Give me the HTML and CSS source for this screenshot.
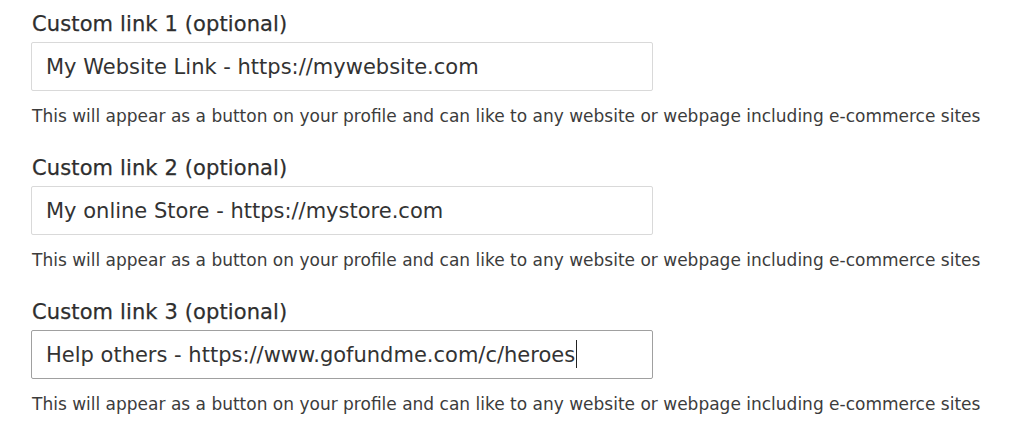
FILE: index.html
```html
<!DOCTYPE html>
<html lang="en">
<head>
<meta charset="utf-8">
<title>Custom links</title>
<link rel="stylesheet" href="styles.css">
</head>
<body>
<form class="links">
  <div class="field">
    <label class="label" for="l1">Custom link 1 (optional)</label>
    <div class="input" id="l1">My Website Link - https://mywebsite.com</div>
    <p class="help">This will appear as a button on your profile and can like to any website or webpage including e-commerce sites</p>
  </div>
  <div class="field">
    <label class="label" for="l2">Custom link 2 (optional)</label>
    <div class="input" id="l2">My online Store - https://mystore.com</div>
    <p class="help">This will appear as a button on your profile and can like to any website or webpage including e-commerce sites</p>
  </div>
  <div class="field">
    <label class="label" for="l3">Custom link 3 (optional)</label>
    <div class="input focused" id="l3">Help others - https://www.gofundme.com/c/heroes<span class="caret"></span></div>
    <p class="help">This will appear as a button on your profile and can like to any website or webpage including e-commerce sites</p>
  </div>
</form>
</body>
</html>
```
FILE: styles.css
```css
html, body {
  margin: 0;
  padding: 0;
  background: #ffffff;
}
body {
  font-family: "DejaVu Sans", "Open Sans", sans-serif;
  color: #333333;
}
.links {
  display: flex;
  flex-direction: column;
  gap: 27px;
  padding: 10px 0 0 32px;
}
.field {
  display: flex;
  flex-direction: column;
  align-items: flex-start;
}
.label {
  display: block;
  font-size: 21px;
  line-height: 28px;
  font-weight: normal;
  color: #2e2e2e;
  letter-spacing: 0.12px;
  -webkit-text-stroke: 0.25px #2e2e2e;
}
.input {
  box-sizing: border-box;
  width: 622px;
  height: 49px;
  margin-top: 4px;
  margin-left: -1px;
  padding: 2px 14px 0;
  border: 1px solid #d9d9d9;
  border-radius: 2px;
  font-size: 21px;
  line-height: 45px;
  color: #333333;
  white-space: nowrap;
}
.input.focused {
  border-color: #a0a0a0;
}
.caret {
  display: inline-block;
  width: 1px;
  height: 28px;
  background: #222222;
  margin-left: 1px;
  vertical-align: -6px;
}
.help {
  margin: 14px 0 0;
  font-size: 17px;
  line-height: 22px;
  color: #3c3c3c;
  white-space: nowrap;
}
```
